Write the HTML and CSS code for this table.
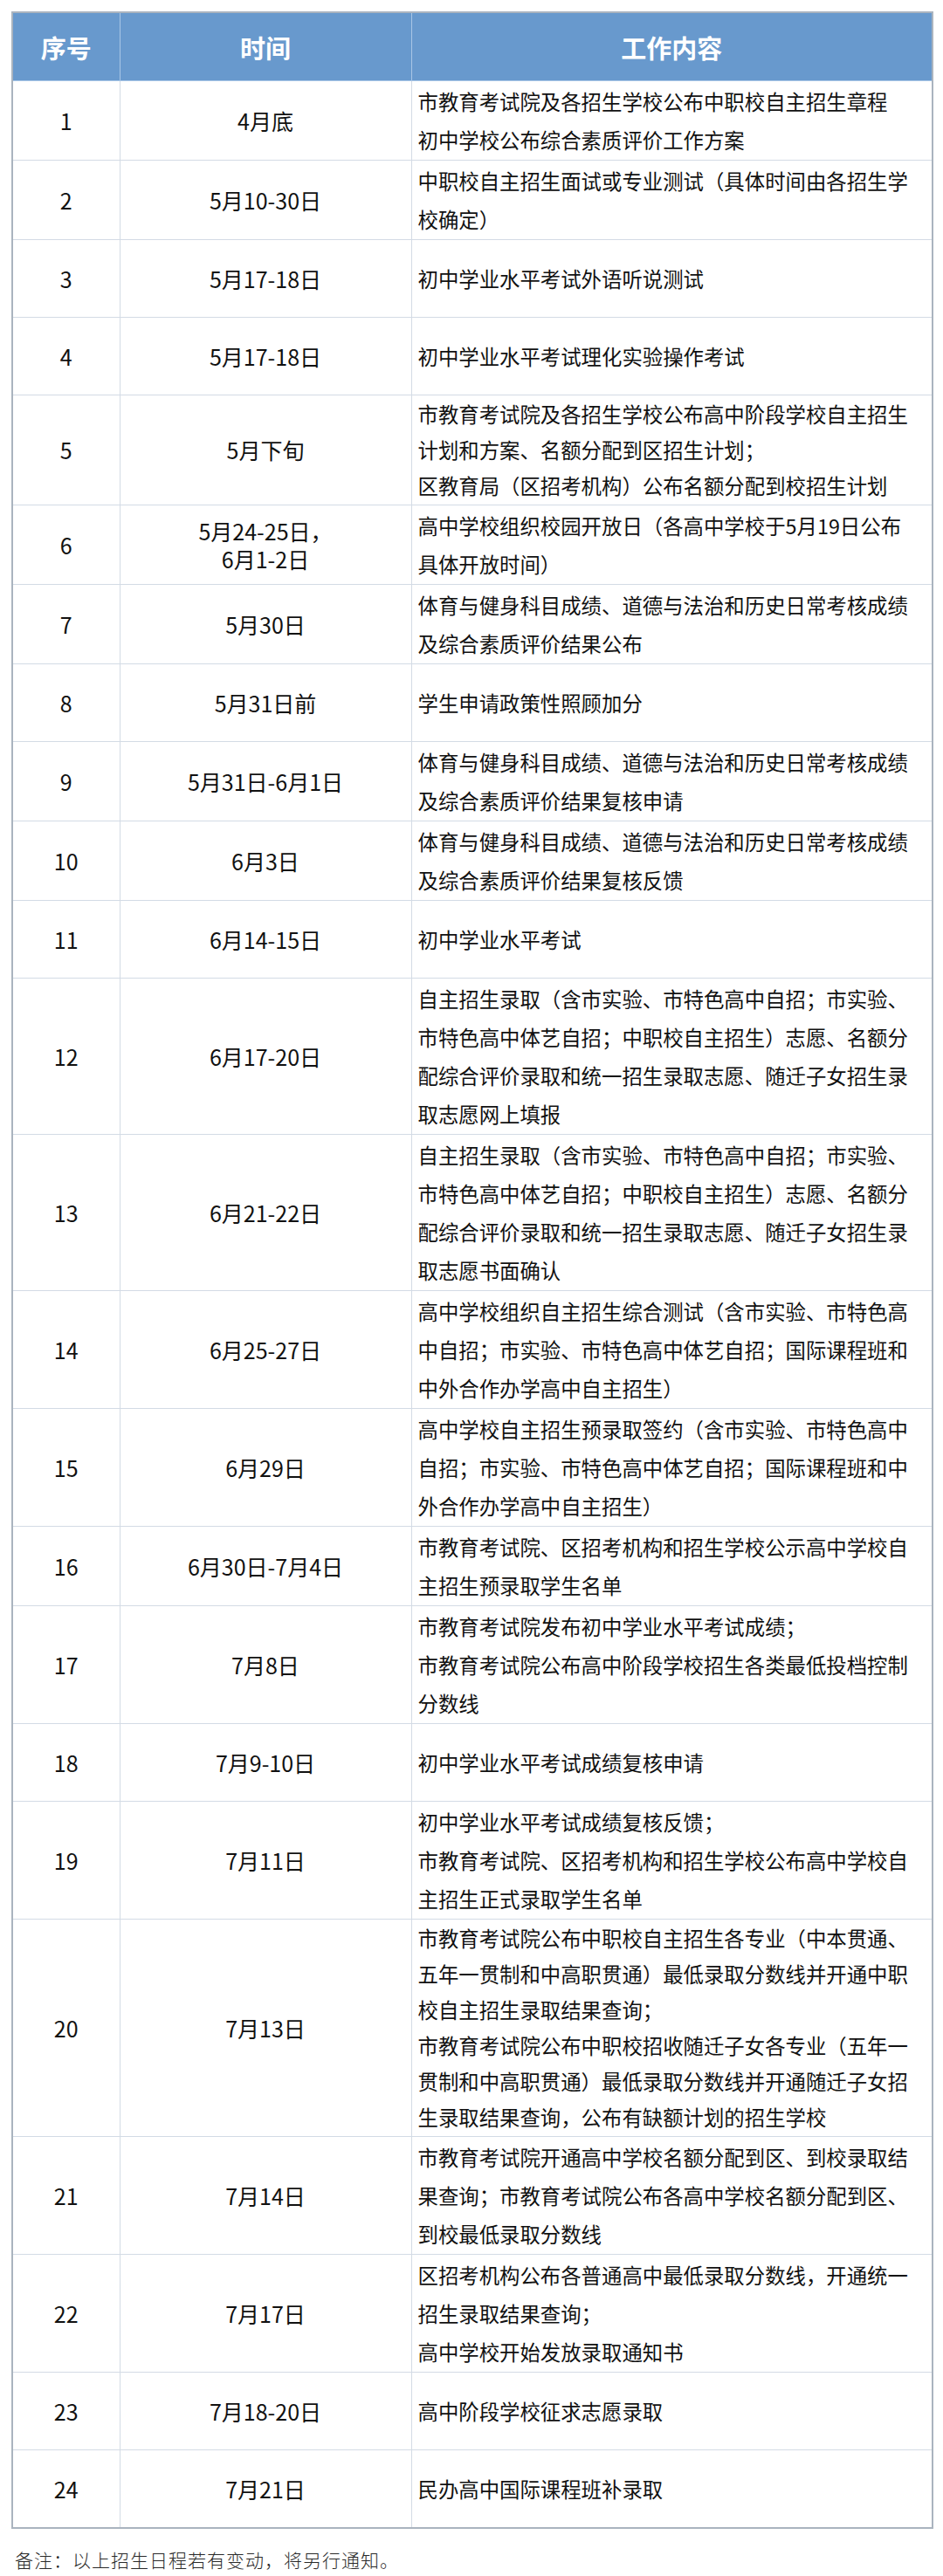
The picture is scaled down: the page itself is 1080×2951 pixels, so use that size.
FILE: index.html
```html
<!DOCTYPE html>
<html lang="zh-CN">
<head>
<meta charset="utf-8">
<title>招生日程</title>
<link rel="stylesheet" href="styles.css">
</head>
<body>
<div class="page">
<table class="schedule">
  <colgroup>
    <col class="c-no">
    <col class="c-time">
    <col class="c-work">
  </colgroup>
  <thead>
    <tr><th>序号</th><th>时间</th><th>工作内容</th></tr>
  </thead>
  <tbody>
    <tr><td class="no">1</td><td class="time">4月底</td><td class="work">市教育考试院及各招生学校公布中职校自主招生章程<br>初中学校公布综合素质评价工作方案</td></tr>
    <tr><td class="no">2</td><td class="time">5月10-30日</td><td class="work">中职校自主招生面试或专业测试（具体时间由各招生学校确定）</td></tr>
    <tr><td class="no">3</td><td class="time">5月17-18日</td><td class="work">初中学业水平考试外语听说测试</td></tr>
    <tr><td class="no">4</td><td class="time">5月17-18日</td><td class="work">初中学业水平考试理化实验操作考试</td></tr>
    <tr class="tight"><td class="no">5</td><td class="time">5月下旬</td><td class="work">市教育考试院及各招生学校公布高中阶段学校自主招生计划和方案、名额分配到区招生计划；<br>区教育局（区招考机构）公布名额分配到校招生计划</td></tr>
    <tr><td class="no">6</td><td class="time dual">5月24-25日，<br>6月1-2日</td><td class="work">高中学校组织校园开放日（各高中学校于5月19日公布具体开放时间）</td></tr>
    <tr><td class="no">7</td><td class="time">5月30日</td><td class="work">体育与健身科目成绩、道德与法治和历史日常考核成绩及综合素质评价结果公布</td></tr>
    <tr><td class="no">8</td><td class="time">5月31日前</td><td class="work">学生申请政策性照顾加分</td></tr>
    <tr><td class="no">9</td><td class="time">5月31日-6月1日</td><td class="work">体育与健身科目成绩、道德与法治和历史日常考核成绩及综合素质评价结果复核申请</td></tr>
    <tr><td class="no">10</td><td class="time">6月3日</td><td class="work">体育与健身科目成绩、道德与法治和历史日常考核成绩及综合素质评价结果复核反馈</td></tr>
    <tr><td class="no">11</td><td class="time">6月14-15日</td><td class="work">初中学业水平考试</td></tr>
    <tr><td class="no">12</td><td class="time">6月17-20日</td><td class="work">自主招生录取（含市实验、市特色高中自招；市实验、市特色高中体艺自招；中职校自主招生）志愿、名额分配综合评价录取和统一招生录取志愿、随迁子女招生录取志愿网上填报</td></tr>
    <tr><td class="no">13</td><td class="time">6月21-22日</td><td class="work">自主招生录取（含市实验、市特色高中自招；市实验、市特色高中体艺自招；中职校自主招生）志愿、名额分配综合评价录取和统一招生录取志愿、随迁子女招生录取志愿书面确认</td></tr>
    <tr><td class="no">14</td><td class="time">6月25-27日</td><td class="work">高中学校组织自主招生综合测试（含市实验、市特色高中自招；市实验、市特色高中体艺自招；国际课程班和中外合作办学高中自主招生）</td></tr>
    <tr><td class="no">15</td><td class="time">6月29日</td><td class="work">高中学校自主招生预录取签约（含市实验、市特色高中自招；市实验、市特色高中体艺自招；国际课程班和中外合作办学高中自主招生）</td></tr>
    <tr><td class="no">16</td><td class="time">6月30日-7月4日</td><td class="work">市教育考试院、区招考机构和招生学校公示高中学校自主招生预录取学生名单</td></tr>
    <tr><td class="no">17</td><td class="time">7月8日</td><td class="work">市教育考试院发布初中学业水平考试成绩；<br>市教育考试院公布高中阶段学校招生各类最低投档控制分数线</td></tr>
    <tr><td class="no">18</td><td class="time">7月9-10日</td><td class="work">初中学业水平考试成绩复核申请</td></tr>
    <tr><td class="no">19</td><td class="time">7月11日</td><td class="work">初中学业水平考试成绩复核反馈；<br>市教育考试院、区招考机构和招生学校公布高中学校自主招生正式录取学生名单</td></tr>
    <tr class="tight"><td class="no">20</td><td class="time">7月13日</td><td class="work">市教育考试院公布中职校自主招生各专业（中本贯通、五年一贯制和中高职贯通）最低录取分数线并开通中职校自主招生录取结果查询；<br>市教育考试院公布中职校招收随迁子女各专业（五年一贯制和中高职贯通）最低录取分数线并开通随迁子女招生录取结果查询，公布有缺额计划的招生学校</td></tr>
    <tr><td class="no">21</td><td class="time">7月14日</td><td class="work">市教育考试院开通高中学校名额分配到区、到校录取结果查询；市教育考试院公布各高中学校名额分配到区、到校最低录取分数线</td></tr>
    <tr><td class="no">22</td><td class="time">7月17日</td><td class="work">区招考机构公布各普通高中最低录取分数线，开通统一招生录取结果查询；<br>高中学校开始发放录取通知书</td></tr>
    <tr><td class="no">23</td><td class="time">7月18-20日</td><td class="work">高中阶段学校征求志愿录取</td></tr>
    <tr><td class="no">24</td><td class="time">7月21日</td><td class="work">民办高中国际课程班补录取</td></tr>
  </tbody>
</table>
<p class="note">备注：以上招生日程若有变动，将另行通知。</p>
</div>
</body>
</html>
```

FILE: styles.css
```css
html, body {
  margin: 0;
  padding: 0;
  background: #ffffff;
}

.page {
  padding: 13px 13px 0 13px;
  font-family: "Noto Sans CJK SC", "Noto Sans", sans-serif;
  color: #111111;
}

.schedule {
  width: 1054px;
  table-layout: fixed;
  border-collapse: collapse;
  border: 2px solid #aab4bf;
}

.c-no { width: 123px; }
.c-time { width: 334px; }
.c-work { width: 597px; }

.schedule th {
  height: 77px;
  padding: 0;
  background: #6899cd;
  color: #ffffff;
  font-size: 29px;
  font-weight: 700;
  text-align: center;
  vertical-align: middle;
  border: 1px solid #a9c6e6;
  border-top-color: #6899cd;
}

.schedule th:first-child { border-left-color: #6899cd; }
.schedule th:last-child { border-right-color: #6899cd; }

.schedule td {
  height: 86px;
  padding: 1px 0;
  font-size: 23.4px;
  line-height: 44px;
  vertical-align: middle;
  border: 1px solid #d3dbe5;
}

.schedule td.no,
.schedule td.time {
  font-size: 25px;
  text-align: center;
}

.schedule tr.tight td {
  line-height: 41px;
}

.schedule td.time.dual {
  line-height: 32px;
}

.schedule td.work {
  padding-left: 7px;
  padding-right: 20px;
  text-align: left;
}

.note {
  margin: 20px 0 0 4px;
  font-size: 21px;
  line-height: 30px;
  font-weight: 300;
  color: #2a2a2a;
  letter-spacing: 1px;
}
```
